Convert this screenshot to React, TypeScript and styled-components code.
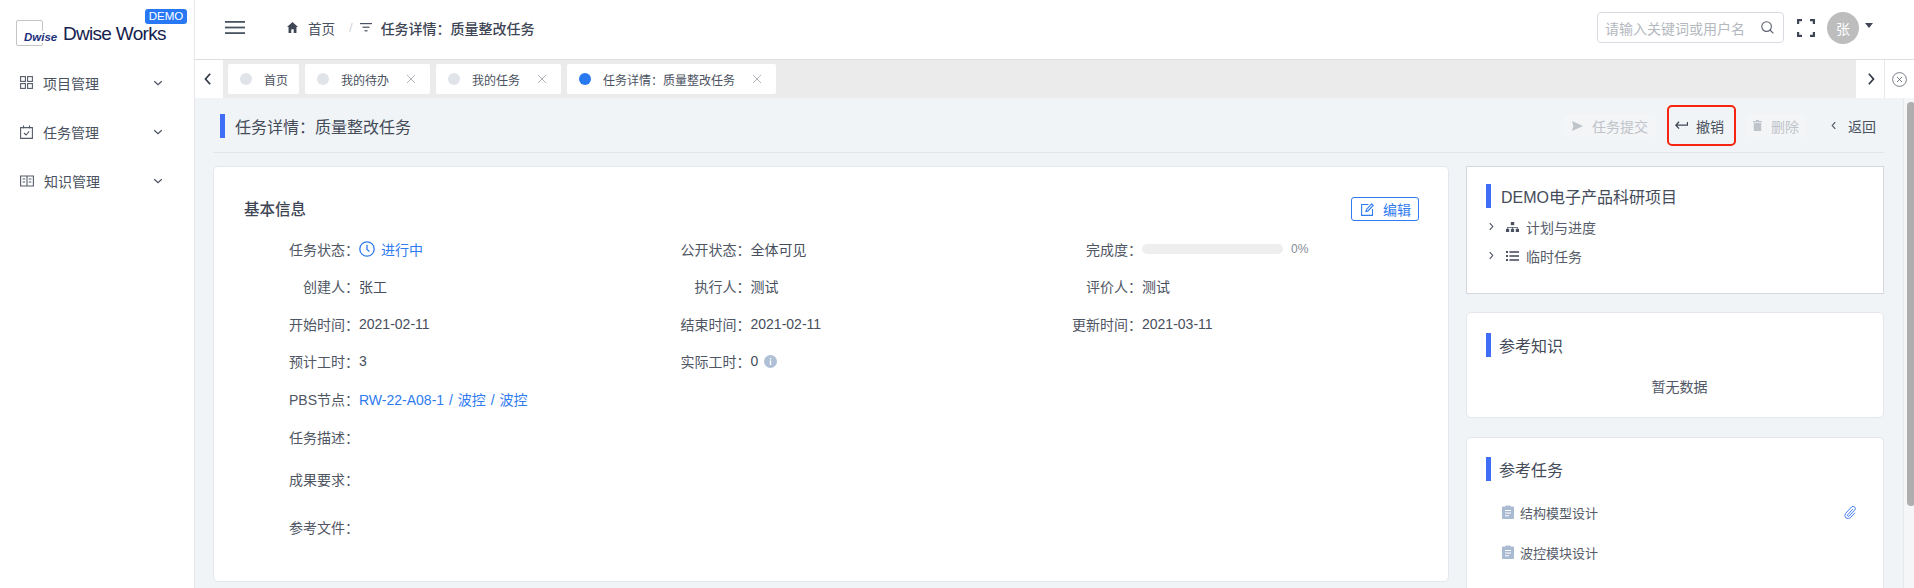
import React from 'react';
import styled, { createGlobalStyle } from 'styled-components';

const GlobalStyle = createGlobalStyle`
  html, body {
    margin: 0;
    padding: 0;
    height: 100%;
    overflow: hidden;
    background: #fff;
  }
  body {
    font-family: "Liberation Sans", "Noto Sans CJK SC", sans-serif;
    font-size: 14px;
    color: #4a5160;
  }
  * {
    box-sizing: border-box;
  }
  svg {
    display: block;
    flex: none;
  }
`;

const Page = styled.div`
  display: flex;
  width: 1914px;
  height: 588px;
  overflow: hidden;
`;

const Sidebar = styled.aside`
  flex: none;
  width: 195px;
  border-right: 1px solid #e6e8ee;
  background: #fff;
`;

const LogoRow = styled.div`
  position: relative;
  height: 58px;
  padding: 20px 0 0 16px;
  display: flex;
  align-items: flex-start;
`;

const LogoBox = styled.div`
  position: relative;
  width: 27px;
  height: 26px;
  border: 1px solid #c4c4c4;
  border-radius: 2px;
  background: #fff;
`;

const LogoMark = styled.span`
  position: absolute;
  left: 7px;
  top: 10px;
  background: #fff;
  font-size: 11.5px;
  line-height: 12px;
  font-weight: 700;
  font-style: italic;
  color: #1c2f7d;
`;

const LogoName = styled.span`
  margin: 4px 0 0 20px;
  font-size: 19px;
  line-height: 20px;
  letter-spacing: -0.7px;
  color: #15214d;
  white-space: nowrap;
`;

const DemoBadge = styled.span`
  position: absolute;
  left: 145px;
  top: 9px;
  width: 42px;
  height: 15px;
  border-radius: 3px;
  background: #2878f6;
  color: #fff;
  font-size: 11.5px;
  line-height: 15px;
  text-align: center;
`;

const MenuList = styled.nav`
  padding-top: 0;
`;

const MenuItem = styled.div`
  display: flex;
  align-items: center;
  height: 49px;
  padding: 0 31px 0 20px;
  color: #4a5160;
  font-size: 14px;
`;

const MenuLabel = styled.span`
  flex: 1;
  margin-left: 10px;
`;

const Main = styled.div`
  flex: 1;
  min-width: 0;
  display: flex;
  flex-direction: column;
`;

const TopBar = styled.header`
  flex: none;
  display: flex;
  align-items: center;
  height: 59px;
  padding: 0 41px 4px 30px;
`;

const Crumbs = styled.div`
  flex: 1;
  display: flex;
  align-items: center;
  margin-left: 42px;
  color: #4a5160;
`;

const CrumbHome = styled.span`
  margin-left: 10px;
  font-size: 13.5px;
`;

const CrumbSep = styled.span`
  margin: 0 7px 0 14px;
  color: #d0d3d9;
  font-size: 13px;
`;

const CrumbTitle = styled.span`
  margin-left: 9px;
  font-size: 14px;
  font-weight: 500;
  color: #3d4554;
`;

const SearchBox = styled.div`
  display: flex;
  align-items: center;
  justify-content: space-between;
  width: 187px;
  height: 31px;
  padding: 0 9px 0 7px;
  border: 1px solid #d8dbe1;
  border-radius: 4px;
  color: #b4b8c0;
  font-size: 14px;
`;

const FullscreenWrap = styled.div`
  margin: 0 12px 0 13px;
`;

const Avatar = styled.div`
  display: flex;
  align-items: center;
  justify-content: center;
  width: 32px;
  height: 32px;
  border-radius: 50%;
  background: #bdbdbd;
  color: #fff;
  font-size: 14px;
`;

const Caret = styled.span`
  margin: 0 0 4px 6px;
  width: 0;
  height: 0;
  border-left: 4px solid transparent;
  border-right: 4px solid transparent;
  border-top: 5px solid #3f4757;
`;

const TabBar = styled.div`
  flex: none;
  display: flex;
  height: 39px;
  border-top: 1px solid #dedede;
  background: #ebebeb;
`;

const ArrowCell = styled.div<{ $wide?: boolean }>`
  flex: none;
  display: flex;
  align-items: center;
  justify-content: center;
  width: ${(p) => (p.$wide ? '30px' : '28px')};
  background: #fff;
  ${(p) => p.$wide && 'border-left: 1px solid #e8e8e8;'}
`;

const TabStrip = styled.div`
  flex: 1;
  display: flex;
  gap: 6px;
  padding: 4px 5px 4px 5px;
`;

const Tab = styled.div<{ $closable?: boolean }>`
  display: flex;
  align-items: center;
  height: 30px;
  padding: 0 ${(p) => (p.$closable ? '15px' : '11px')} 0 12px;
  border-radius: 2px;
  background: #fff;
  font-size: 12px;
  color: #4a5160;
`;

const TabDot = styled.span<{ $active?: boolean }>`
  width: 12px;
  height: 12px;
  margin-right: 12px;
  border-radius: 50%;
  background: ${(p) => (p.$active ? '#2878f0' : '#e0e3e8')};
`;

const TabClose = styled.span`
  margin-left: 18px;
`;

const Body = styled.div`
  flex: 1;
  min-height: 0;
  display: flex;
  background: #f0f4f7;
`;

const Content = styled.div`
  flex: 1;
  min-width: 0;
  padding: 0 19px 0 18px;
`;

const PageHead = styled.div`
  display: flex;
  align-items: center;
  justify-content: space-between;
  height: 55px;
  padding: 1px 8px 0 7px;
  border-bottom: 1px solid #e2e5e9;
`;

const AccentBar = styled.span`
  flex: none;
  width: 5px;
  height: 24px;
  background: #3f6df8;
`;

const PageTitle = styled.h1`
  display: flex;
  align-items: center;
  gap: 10px;
  margin: 0;
  font-size: 16px;
  font-weight: 400;
  color: #444b59;
`;

const Actions = styled.div`
  display: flex;
  align-items: center;
`;

const ActionButton = styled.div<{ $disabled?: boolean; $marked?: boolean }>`
  display: flex;
  align-items: center;
  height: ${(p) => (p.$marked ? '41px' : '23px')};
  padding: 0 8px;
  gap: 9px;
  border-radius: 4px;
  background: ${(p) => (p.$disabled ? '#f3f5f7' : 'transparent')};
  color: ${(p) => (p.$disabled ? '#bfc3ca' : '#4a5160')};
  ${(p) => p.$marked && 'border: 2px solid #f5250f; border-radius: 5px; margin: 0 9px 0 11px; padding: 0 10px 0 6px; gap: 8px;'}
`;

const BackButton = styled(ActionButton)`
  margin-left: 23px;
  padding: 0;
  gap: 9px;
`;

const Columns = styled.div`
  display: flex;
  gap: 17px;
  margin-top: 13px;
`;

const InfoCard = styled.section`
  flex: none;
  position: relative;
  width: 1236px;
  height: 416px;
  padding: 30px 0 0 30px;
  border: 1px solid #e4e7ed;
  border-radius: 5px;
  background: #fff;
`;

const InfoHead = styled.div`
  display: flex;
  align-items: center;
  justify-content: space-between;
  height: 24px;
  padding-right: 29px;
`;

const InfoTitle = styled.h2`
  margin: 0;
  padding-bottom: 2px;
  font-size: 15.5px;
  font-weight: 500;
  color: #3d4554;
`;

const EditButton = styled.div`
  display: flex;
  align-items: center;
  gap: 9px;
  width: 68px;
  height: 24px;
  padding-left: 9px;
  border: 1px solid #2f7bf0;
  border-radius: 3px;
  color: #2f7bf0;
`;

const InfoGrid = styled.div`
  display: grid;
  grid-template-columns: repeat(3, 391.5px);
  grid-auto-rows: 37.3px;
  margin-top: 9.5px;
`;

const Field = styled.div`
  display: flex;
  align-items: center;
  min-width: 0;
`;

const FieldLabel = styled.span`
  flex: none;
  width: 115px;
  text-align: right;
  color: #4f5664;
`;

const FieldValue = styled.span<{ $link?: boolean }>`
  display: flex;
  align-items: center;
  gap: 6px;
  color: ${(p) => (p.$link ? '#2f7bf0' : '#474e5c')};
  white-space: pre;
`;

const PbsLink = styled(FieldValue)`
  word-spacing: 1px;
`;

const ProgressTrack = styled.span`
  display: block;
  width: 141px;
  height: 10px;
  border-radius: 5px;
  background: #eeeeee;
`;

const ProgressText = styled.span`
  margin-left: 2px;
  font-size: 12px;
  color: #868b95;
`;

const LongRow = styled(Field)<{ $height: number }>`
  height: ${(p) => p.$height}px;
`;

const Side = styled.div`
  flex: none;
  display: flex;
  flex-direction: column;
  width: 418px;
`;

const ProjectCard = styled.section`
  height: 128px;
  padding: 17px 20px 0 19px;
  border: 1px solid #d4d8de;
  background: #fff;
`;

const SideCard = styled.section<{ $height: number }>`
  flex: none;
  height: ${(p) => p.$height}px;
  margin-top: 18px;
  padding: 20px 20px 0 19px;
  border: 1px solid #e4e7ed;
  border-radius: 5px;
  background: #fff;
  & + & {
    margin-top: 19px;
    padding-top: 19px;
  }
`;

const SideHead = styled.div`
  display: flex;
  align-items: center;
  gap: 8px;
  font-size: 16px;
  color: #444b59;
`;

const ProjectHead = styled(SideHead)`
  gap: 10px;
`;

const TreeRow = styled.div`
  display: flex;
  align-items: center;
  height: 29px;
  color: #565c69;
`;

const TreeLabel = styled.span`
  margin-left: 7px;
`;

const TreeIcon = styled.span`
  margin-left: 11px;
`;

const TreeList = styled.div`
  margin-top: 4px;
`;

const Empty = styled.div`
  margin-top: 19px;
  padding-left: 10px;
  text-align: center;
  color: #4f5664;
`;

const TaskList = styled.div`
  margin-top: 11px;
`;

const TaskRow = styled.div`
  display: flex;
  align-items: center;
  height: 40px;
  padding: 0 7px 0 16px;
  font-size: 13px;
  color: #565c69;
`;

const TaskName = styled.span`
  flex: 1;
  margin-left: 6px;
`;

const ScrollRail = styled.div`
  flex: none;
  width: 11px;
  padding: 4px 0 0 3px;
  border-left: 1px solid #e6e8ec;
  background: #f5f6f8;
`;

const ScrollThumb = styled.div`
  width: 8px;
  height: 404px;
  border-radius: 4px;
  background: #aeaeae;
`;

const Chevron = ({ dir, size = 10, color = '#4a5160' }: { dir: 'left' | 'right' | 'down'; size?: number; color?: string }) => {
  const d = dir === 'left' ? 'M7 1.5 3 6l4 4.5' : dir === 'right' ? 'M5 1.5 9 6l-4 4.5' : 'M1.5 4 6 8l4.5-4';
  return (
    <svg width={size} height={size} viewBox="0 0 12 12" fill="none" stroke={color} strokeWidth="1.5">
      <path d={d} />
    </svg>
  );
};

const CloseX = () => (
  <svg width="8" height="8" viewBox="0 0 8 8" stroke="#a6a9b0" strokeWidth="0.9">
    <path d="M0 0l8 8M8 0 0 8" />
  </svg>
);

const GridIcon = () => (
  <svg width="13" height="13" viewBox="0 0 13 13" fill="none" stroke="#555c69" strokeWidth="1.1">
    <rect x="0.6" y="0.6" width="4.8" height="4.8" />
    <rect x="7.6" y="0.6" width="4.8" height="4.8" />
    <rect x="0.6" y="7.6" width="4.8" height="4.8" />
    <rect x="7.6" y="7.6" width="4.8" height="4.8" />
  </svg>
);

const CalendarIcon = () => (
  <svg width="13" height="14" viewBox="0 0 13 14" fill="none" stroke="#555c69" strokeWidth="1.1">
    <path d="M.6 2.6h11.8v10.8H.6zM3.5.5v3M9.5.5v3M4 8l2 2 3.2-3.6" />
  </svg>
);

const BookIcon = () => (
  <svg width="14" height="12" viewBox="0 0 14 12" fill="none" stroke="#555c69" strokeWidth="1.1">
    <path d="M.6 1h12.8v10H.6zM7 1v10M2.6 4h2.6M2.6 7h2.6M8.8 4h2.6M8.8 7h2.6" />
  </svg>
);

const Hamburger = () => (
  <svg width="20" height="13" viewBox="0 0 20 13" fill="#4a5563">
    <rect width="20" height="1.8" />
    <rect y="5.6" width="20" height="1.8" />
    <rect y="11.2" width="20" height="1.8" />
  </svg>
);

const HomeIcon = () => (
  <svg width="11" height="11" viewBox="0 0 10 10" fill="#3f4757">
    <path d="M5 0 0 4.6h1.4V10h2.5V6.6h2.2V10h2.5V4.6H10z" />
  </svg>
);

const FilterIcon = () => (
  <svg width="12" height="9" viewBox="0 0 12 9" fill="#4a5160">
    <rect width="12" height="1.2" />
    <rect x="2.5" y="3.6" width="7" height="1.2" />
    <rect x="4.5" y="7.2" width="3" height="1.2" />
  </svg>
);

const SearchIcon = () => (
  <svg width="13" height="13" viewBox="0 0 13 13" fill="none" stroke="#5b616d" strokeWidth="1.1">
    <circle cx="5.6" cy="5.6" r="4.8" />
    <path d="M9 9l3.4 3.4" />
  </svg>
);

const FullscreenIcon = () => (
  <svg width="18" height="18" viewBox="0 0 18 18" fill="none" stroke="#3f4757" strokeWidth="2.2">
    <path d="M1.1 5V1.1H5M13 1.1h3.9V5M16.9 13v3.9H13M5 16.9H1.1V13" />
  </svg>
);

const CircleClose = () => (
  <svg width="15" height="15" viewBox="0 0 15 15" fill="none" stroke="#5b616d" strokeWidth="0.8">
    <circle cx="7.5" cy="7.5" r="6.9" />
    <path d="M5 5l5 5M10 5l-5 5" />
  </svg>
);

const SendIcon = () => (
  <svg width="11" height="10" viewBox="0 0 11 10" fill="#bfc3ca">
    <path d="M0 0l11 5-11 5 1.4-5z" />
  </svg>
);

const UndoIcon = () => (
  <svg width="13" height="9" viewBox="0 0 13 9" fill="none" stroke="#3f4757" strokeWidth="1.3">
    <path d="M4 .8.9 4.2 4 7.6M1 4.2h11.5V1" />
  </svg>
);

const TrashIcon = () => (
  <svg width="9" height="11" viewBox="0 0 9 11" fill="#bfc3ca">
    <path d="M3 0h3v1h3v1.2H0V1h3zM.8 3h7.4v8H.8z" />
  </svg>
);

const EditIcon = () => (
  <svg width="13" height="13" viewBox="0 0 13 13" fill="none" stroke="#2f7bf0" strokeWidth="1.1">
    <path d="M7.5 1.5H.6v10.9h10.9V6M5 8.4l.5-2L10.7.9l1.5 1.5-5.2 5.5z" />
  </svg>
);

const ClockIcon = () => (
  <svg width="16" height="16" viewBox="0 0 16 16" fill="none" stroke="#2f7bf0" strokeWidth="1.3">
    <circle cx="8" cy="8" r="7.2" />
    <path d="M8 3.8V8.4l2.4 2" />
  </svg>
);

const InfoIcon = () => (
  <svg width="13" height="13" viewBox="0 0 13 13">
    <circle cx="6.5" cy="6.5" r="6.5" fill="#afc0d6" />
    <rect x="5.8" y="5.4" width="1.4" height="4.6" fill="#fff" />
    <rect x="5.8" y="3" width="1.4" height="1.4" fill="#fff" />
  </svg>
);

const SitemapIcon = () => (
  <svg width="13" height="10" viewBox="0 0 13 10" fill="#4a5160">
    <rect x="4.8" y="0" width="3.4" height="3.2" />
    <rect x="0" y="6.8" width="3.2" height="3.2" />
    <rect x="4.9" y="6.8" width="3.2" height="3.2" />
    <rect x="9.8" y="6.8" width="3.2" height="3.2" />
    <path d="M1.2 6.8V5h10.6v1.8h-.9V5.8H7v1H6v-1H2.1v1z" />
  </svg>
);

const ListIcon = () => (
  <svg width="13" height="10" viewBox="0 0 13 10" fill="#4a5160">
    <rect y="0" width="2" height="2" />
    <rect y="4" width="2" height="2" />
    <rect y="8" width="2" height="2" />
    <rect x="3.4" y="0.2" width="9.6" height="1.6" />
    <rect x="3.4" y="4.2" width="9.6" height="1.6" />
    <rect x="3.4" y="8.2" width="9.6" height="1.6" />
  </svg>
);

const ClipboardIcon = () => (
  <svg width="12" height="14" viewBox="0 0 12 14">
    <path d="M1 1.5h2.6V.4h4.8v1.1H11a1 1 0 0 1 1 1V13a1 1 0 0 1-1 1H1a1 1 0 0 1-1-1V2.5a1 1 0 0 1 1-1z" fill="#a9bbd1" />
    <path d="M3 5h6v1H3zM3 7.6h6v1H3zM3 10.2h4v1H3z" fill="#fff" />
  </svg>
);

const PaperclipIcon = () => (
  <svg width="12" height="13" viewBox="0 0 12 13" fill="none" stroke="#2f6ff0" strokeWidth="0.9">
    <path d="M8.8 3.2 3.6 8.8a1 1 0 0 0 1.5 1.3l5.7-6.2a2.2 2.2 0 0 0-3.2-3L1.8 7.2a3.2 3.2 0 0 0 4.7 4.4L11 6.7" />
  </svg>
);

const menus = [
  { label: '项目管理', icon: <GridIcon /> },
  { label: '任务管理', icon: <CalendarIcon /> },
  { label: '知识管理', icon: <BookIcon /> },
];

const tabs = [
  { label: '首页', closable: false, active: false },
  { label: '我的待办', closable: true, active: false },
  { label: '我的任务', closable: true, active: false },
  { label: '任务详情：质量整改任务', closable: true, active: true },
];

const infoRows = [
  ['任务状态：', '公开状态：', '完成度：'],
  ['创建人：', '执行人：', '评价人：'],
  ['开始时间：', '结束时间：', '更新时间：'],
  ['预计工时：', '实际工时：', ''],
];

const infoValues: React.ReactNode[][] = [
  [
    <FieldValue $link key="s"><ClockIcon />进行中</FieldValue>,
    <FieldValue key="p">全体可见</FieldValue>,
    <FieldValue key="c"><ProgressTrack /><ProgressText>0%</ProgressText></FieldValue>,
  ],
  [
    <FieldValue key="a">张工</FieldValue>,
    <FieldValue key="b">测试</FieldValue>,
    <FieldValue key="c">测试</FieldValue>,
  ],
  [
    <FieldValue key="a">2021-02-11</FieldValue>,
    <FieldValue key="b">2021-02-11</FieldValue>,
    <FieldValue key="c">2021-03-11</FieldValue>,
  ],
  [
    <FieldValue key="a">3</FieldValue>,
    <FieldValue key="b">0<InfoIcon /></FieldValue>,
    null,
  ],
];

const App = () => (
  <Page>
    <GlobalStyle />
    <Sidebar>
      <LogoRow>
        <LogoBox>
          <LogoMark>Dwise</LogoMark>
        </LogoBox>
        <LogoName>Dwise Works</LogoName>
        <DemoBadge>DEMO</DemoBadge>
      </LogoRow>
      <MenuList>
        {menus.map((m) => (
          <MenuItem key={m.label}>
            {m.icon}
            <MenuLabel>{m.label}</MenuLabel>
            <Chevron dir="down" />
          </MenuItem>
        ))}
      </MenuList>
    </Sidebar>
    <Main>
      <TopBar>
        <Hamburger />
        <Crumbs>
          <HomeIcon />
          <CrumbHome>首页</CrumbHome>
          <CrumbSep>/</CrumbSep>
          <FilterIcon />
          <CrumbTitle>任务详情：质量整改任务</CrumbTitle>
        </Crumbs>
        <SearchBox>
          请输入关键词或用户名
          <SearchIcon />
        </SearchBox>
        <FullscreenWrap>
          <FullscreenIcon />
        </FullscreenWrap>
        <Avatar>张</Avatar>
        <Caret />
      </TopBar>
      <TabBar>
        <ArrowCell>
          <Chevron dir="left" size={14} color="#333a47" />
        </ArrowCell>
        <TabStrip>
          {tabs.map((t) => (
            <Tab key={t.label} $closable={t.closable}>
              <TabDot $active={t.active} />
              {t.label}
              {t.closable && (
                <TabClose>
                  <CloseX />
                </TabClose>
              )}
            </Tab>
          ))}
        </TabStrip>
        <ArrowCell>
          <Chevron dir="right" size={14} color="#333a47" />
        </ArrowCell>
        <ArrowCell $wide>
          <CircleClose />
        </ArrowCell>
      </TabBar>
      <Body>
        <Content>
          <PageHead>
            <PageTitle>
              <AccentBar />
              任务详情：质量整改任务
            </PageTitle>
            <Actions>
              <ActionButton $disabled>
                <SendIcon />
                任务提交
              </ActionButton>
              <ActionButton $marked>
                <UndoIcon />
                撤销
              </ActionButton>
              <ActionButton $disabled>
                <TrashIcon />
                删除
              </ActionButton>
              <BackButton>
                <Chevron dir="left" size={9} />
                返回
              </BackButton>
            </Actions>
          </PageHead>
          <Columns>
            <InfoCard>
              <InfoHead>
                <InfoTitle>基本信息</InfoTitle>
                <EditButton>
                  <EditIcon />
                  编辑
                </EditButton>
              </InfoHead>
              <InfoGrid>
                {infoRows.map((row, r) =>
                  row.map((label, c) => (
                    <Field key={`${r}-${c}`}>
                      <FieldLabel>{label}</FieldLabel>
                      {infoValues[r][c]}
                    </Field>
                  )),
                )}
              </InfoGrid>
              <LongRow $height={38}>
                <FieldLabel>PBS节点：</FieldLabel>
                <PbsLink $link>RW-22-A08-1 / 波控 / 波控</PbsLink>
              </LongRow>
              <LongRow $height={38}>
                <FieldLabel>任务描述：</FieldLabel>
              </LongRow>
              <LongRow $height={46}>
                <FieldLabel>成果要求：</FieldLabel>
              </LongRow>
              <LongRow $height={50}>
                <FieldLabel>参考文件：</FieldLabel>
              </LongRow>
            </InfoCard>
            <Side>
              <ProjectCard>
                <ProjectHead>
                  <AccentBar />
                  DEMO电子产品科研项目
                </ProjectHead>
                <TreeList>
                  <TreeRow>
                    <Chevron dir="right" size={9} />
                    <TreeIcon>
                      <SitemapIcon />
                    </TreeIcon>
                    <TreeLabel>计划与进度</TreeLabel>
                  </TreeRow>
                  <TreeRow>
                    <Chevron dir="right" size={9} />
                    <TreeIcon>
                      <ListIcon />
                    </TreeIcon>
                    <TreeLabel>临时任务</TreeLabel>
                  </TreeRow>
                </TreeList>
              </ProjectCard>
              <SideCard $height={106}>
                <SideHead>
                  <AccentBar />
                  参考知识
                </SideHead>
                <Empty>暂无数据</Empty>
              </SideCard>
              <SideCard $height={200}>
                <SideHead>
                  <AccentBar />
                  参考任务
                </SideHead>
                <TaskList>
                  <TaskRow>
                    <ClipboardIcon />
                    <TaskName>结构模型设计</TaskName>
                    <PaperclipIcon />
                  </TaskRow>
                  <TaskRow>
                    <ClipboardIcon />
                    <TaskName>波控模块设计</TaskName>
                  </TaskRow>
                </TaskList>
              </SideCard>
            </Side>
          </Columns>
        </Content>
        <ScrollRail>
          <ScrollThumb />
        </ScrollRail>
      </Body>
    </Main>
  </Page>
);

export default App;
